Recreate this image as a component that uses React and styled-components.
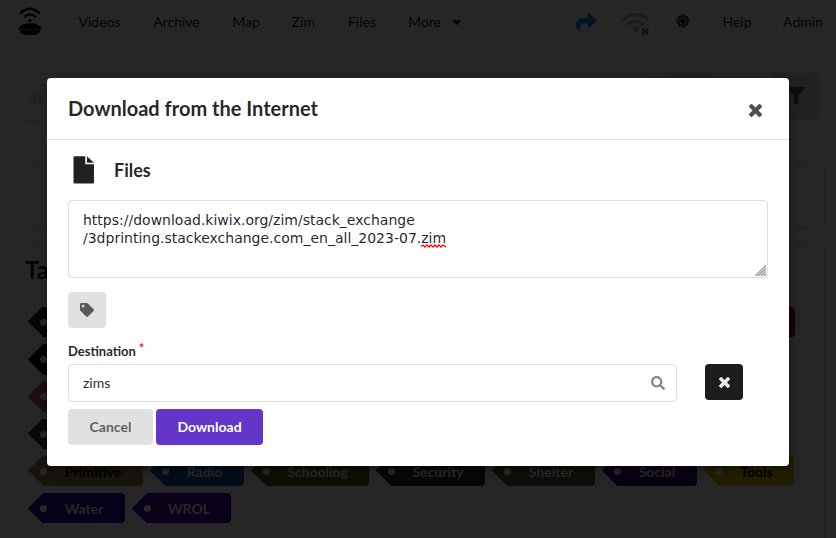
import React from "react";
import styled, { createGlobalStyle } from "styled-components";
import { FaShare, FaWifi, FaFilter, FaTag, FaSearch, FaCaretDown } from "react-icons/fa";

const GlobalStyle = createGlobalStyle`
  * { box-sizing: border-box; }
  body { margin: 0; overflow: hidden; background: #fff; color: rgba(0,0,0,.87);
    font: 14px/1.4285em Lato, "Liberation Sans", sans-serif; }
`;
const Screen = styled.div`position: relative; width: 836px; height: 538px; overflow: hidden;`;
const NavBar = styled.nav`
  display: flex; height: 45px; border-bottom: 1px solid rgba(34,36,38,.18);
`;
const NavItem = styled.a`
  width: ${p => p.$w}px; flex: none; display: flex; align-items: center; justify-content: center;
  font-size: 14px; padding: 0 ${p => p.$right || 0}px ${p => p.$bottom || 0}px ${p => p.$left || 0}px;
  border-right: ${p => (p.$plain ? 0 : 1)}px solid rgba(34,36,38,.1);
  svg { flex: none; }
`;
const Caret = styled(FaCaretDown)`margin-left: 9px; font-size: 14px;`;
const Spacer = styled.div`flex: 1;`;
const WifiGroup = styled.span`position: relative; display: flex; color: #90bde0;`;
const WifiOff = styled.span`position: absolute; right: 0; bottom: 1px; display: flex;`;
const SearchRow = styled.div`display: flex; padding: 28px 16px 0 10px;`;
const SearchBox = styled.div`
  width: 642px; height: 48px; border: 1px solid rgba(34,36,38,.15); border-radius: 4px;
  padding: 14px 18px; font-size: 16px; color: rgba(170,170,170,.6);
`;
const GreyButton = styled.div`
  width: ${p => p.$w}px; height: 46px; margin-left: ${p => p.$gap}px; border-radius: 4px;
  background: #e0e1e2; color: rgba(0,0,0,.6); display: flex; align-items: center; justify-content: center;
  font-size: 18px;
`;
const Segment = styled.section`
  margin: ${p => p.$top}px 11px 0 10px; height: ${p => p.$h}px; padding: 11px 14px 14px;
  border: 1px solid rgba(34,36,38,.15); border-radius: 4px; box-shadow: 0 1px 2px rgba(34,36,38,.15);
`;
const TagsTitle = styled.h1`margin: 0 0 22px; font-size: 24px; line-height: 30px;`;
const TagRow = styled.div`display: flex; height: 30.3px; margin: 0 0 6.95px 18px;`;
const TagLabel = styled.div`
  position: relative; width: ${p => p.$w}px; margin-right: ${p => p.$gap ?? 22}px; flex: none;
  display: flex; align-items: center; justify-content: center; padding-top: 1px;
  border-radius: 0 4px 4px 0; background: ${p => p.$bg}; color: ${p => (p.$dark ? "#000" : "#fff")};
  font-size: 14px; font-weight: 700;
  &::before { content: ""; position: absolute; width: 21.4px; height: 21.4px; left: -10.7px; top: 4.45px;
    background: inherit; transform: rotate(45deg); }
  &::after { content: ""; position: absolute; width: 7px; height: 7px; left: -3px; top: 11.8px;
    border-radius: 50%; background: #fff; }
`;
const TagText = styled.span`position: relative;`;
const Dimmer = styled.div`
  position: absolute; inset: 0; background: rgba(0,0,0,.85); padding: 78px 47px 0;
`;
const Modal = styled.div`
  width: 742px; height: 388px; background: #fff; border-radius: 4px;
  box-shadow: 1px 3px 3px rgba(0,0,0,.2), 1px 3px 15px 2px rgba(0,0,0,.2);
`;
const ModalHeader = styled.header`
  height: 62px; display: flex; align-items: flex-start; justify-content: space-between;
  padding: 17px 27px 0 21px; border-bottom: 1px solid rgba(34,36,38,.15);
`;
const ModalTitle = styled.h2`margin: 0; font-size: 20px; line-height: 26px; font-weight: 700;`;
const CloseButton = styled.span`display: flex; margin-top: 9px;`;
const ModalBody = styled.div`padding: 14px 21px;`;
const FilesHeading = styled.h3`
  display: flex; align-items: center; margin: 0; height: 32px; font-size: 18px; line-height: 24px;
`;
const FileGlyph = styled.svg`width: 22px; height: 28px; margin: 0 19px 0 5px;`;
const UrlArea = styled.div`
  display: flex; justify-content: space-between; height: 78px; margin-top: 14px; padding: 10px 1px 1px 14px;
  border: 1px solid rgba(34,36,38,.15); border-radius: 4px;
  font: 14px/18px "DejaVu Sans", sans-serif;
`;
const UrlText = styled.div`white-space: pre;`;
const Misspelled = styled.span`position: relative;`;
const Squiggle = styled.svg`position: absolute; left: 0; bottom: -2px; width: 25px; height: 4px;`;
const Grip = styled.svg`width: 11px; height: 11px; align-self: flex-end;`;
const Button = styled.button`
  width: ${p => p.$w}px; height: 36px; border: 0; border-radius: 4px; padding: 0;
  display: flex; align-items: center; justify-content: center;
  font: 700 14px/14px Lato, sans-serif;
  background: ${p => p.$bg || "#e0e1e2"}; color: ${p => p.$fg || "rgba(0,0,0,.6)"};
`;
const TagSlot = styled.div`margin-top: 14px;`;
const FieldLabel = styled.label`
  display: block; margin-top: 14px; height: 19px; font-size: 13px; line-height: 19px; font-weight: 700;
`;
const Required = styled.span`color: #db2828; margin-left: 3px; vertical-align: 3px; line-height: 0;`;
const FieldRow = styled.div`display: flex; gap: 28px; margin-top: 3px;`;
const DestinationInput = styled.div`
  width: 609px; height: 38px; border: 1px solid rgba(34,36,38,.15); border-radius: 4px;
  display: flex; align-items: center; justify-content: space-between; padding: 0 11px 0 14px;
`;
const Actions = styled.div`display: flex; gap: 3px; margin-top: 7px;`;

function PieLogo() {
  return (
    <svg width="24" height="29" viewBox="0 0 24 29">
      <g fill="none" stroke="#000" strokeLinecap="round">
        <path d="M2.8 6Q12-2.6 21.2 6" strokeWidth="2.3" />
        <path d="M6.8 9.7Q12 5 17.2 9.7" strokeWidth="2.3" />
      </g>
      <circle cx="12" cy="13.5" r="1.7" />
      <path d="M.6 21Q3 16.3 12 16.3T23.4 21Q24 22.2 22 22.6H2Q0 22.2 .6 21Z" />
      <path d="M1.5 22.5H22.5L21 26.2Q19 28 12 28T3 26.2Z" />
      <path d="M2 22.4Q12 23.8 22 22.4M8 18.4L7 19.8M12 17.8V19.2M16 18.4L17 19.8" fill="none" stroke="#888" strokeWidth=".6" />
    </svg>
  );
}
function GearSun() {
  return (
    <svg width="14" height="14" viewBox="0 0 14 14">
      <circle cx="7" cy="7" r="4.4" fill="none" stroke="#000" strokeWidth="1.5" />
      <circle cx="7" cy="7" r="5.8" fill="none" stroke="#000" strokeWidth="1.8" strokeDasharray="1.5 1.537" />
      <circle cx="7" cy="7" r="2.7" />
    </svg>
  );
}
function Cross({ size, color }) {
  return (
    <svg width={size} height={size} viewBox="302 366 1188 1188" fill={color}>
      <path d="M1490 1322q0 40-28 68l-136 136q-28 28-68 28t-68-28l-294-294-294 294q-28 28-68 28t-68-28l-136-136q-28-28-28-68t28-68l294-294-294-294q-28-28-28-68t28-68l136-136q28-28 68-28t68 28l294 294 294-294q28-28 68-28t68 28l136 136q28 28 28 68t-28 68l-294 294 294 294q28 28 28 68z" />
    </svg>
  );
}
function Tag({ children, ...rest }) {
  return <TagLabel {...rest}>{children && <TagText>{children}</TagText>}</TagLabel>;
}

export default function App() {
  return (
    <Screen>
      <GlobalStyle />
      <NavBar>
        <NavItem $w={63} $right={3} $bottom={2}><PieLogo /></NavItem>
        <NavItem $w={74}>Videos</NavItem>
        <NavItem $w={80}>Archive</NavItem>
        <NavItem $w={59}>Map</NavItem>
        <NavItem $w={56}>Zim</NavItem>
        <NavItem $w={61}>Files</NavItem>
        <NavItem $w={85} $left={2}>More<Caret /></NavItem>
        <Spacer />
        <NavItem $w={50} $plain $left={2}><FaShare size={21} color="#2185d0" /></NavItem>
        <NavItem $w={50} $plain $left={1}>
          <WifiGroup><FaWifi size={27} /><WifiOff><Cross size={7} color="#2185d0" /></WifiOff></WifiGroup>
        </NavItem>
        <NavItem $w={47} $bottom={2}><GearSun /></NavItem>
        <NavItem $w={61}>Help</NavItem>
        <NavItem $w={68} $plain $left={2}>Admin</NavItem>
      </NavBar>
      <SearchRow>
        <SearchBox>Search</SearchBox>
        <GreyButton $w={50} $gap={14} />
        <GreyButton $w={49} $gap={55}><FaFilter /></GreyButton>
      </SearchRow>
      <Segment $top={42} $h={66} />
      <Segment $top={14} $h={400}>
        <TagsTitle>Tags</TagsTitle>
        <TagRow><Tag $w={82} $bg="#333" /><Tag $w={648} $gap={0} $bg="#a0005c" /></TagRow>
        <TagRow><Tag $w={90} $bg="#000" /></TagRow>
        <TagRow><Tag $w={90} $bg="#b85a98" /></TagRow>
        <TagRow><Tag $w={90} $bg="#444" /></TagRow>
        <TagRow>
          <Tag $w={100} $gap={22} $bg="#a5854f" $dark>Primitive</Tag>
          <Tag $w={79} $gap={22} $bg="#1657ae">Radio</Tag>
          <Tag $w={103} $gap={22} $bg="#556b1c">Schooling</Tag>
          <Tag $w={94} $gap={22} $bg="#333">Security</Tag>
          <Tag $w={88} $gap={22} $bg="#655638">Shelter</Tag>
          <Tag $w={80} $gap={22} $bg="#400082">Social</Tag>
          <Tag $w={75} $gap={0} $bg="#e8ca00" $dark>Tools</Tag>
        </TagRow>
        <TagRow><Tag $w={82} $gap={22} $bg="#2600a0">Water</Tag><Tag $w={84} $bg="#480098">WROL</Tag></TagRow>
      </Segment>
      <Dimmer>
        <Modal>
          <ModalHeader>
            <ModalTitle>Download from the Internet</ModalTitle>
            <CloseButton><Cross size={13} color="#505050" /></CloseButton>
          </ModalHeader>
          <ModalBody>
            <FilesHeading>
              <FileGlyph viewBox="0 0 22 28">
                <path d="M1.2 .3H12.3V8.3H21V26.5Q21 27.5 20 27.5H1.5Q.5 27.5 .5 26.5V1Q.5 .3 1.2 .3ZM14 .3L21 6.8H14Z" fill="#212121" />
              </FileGlyph>
              Files
            </FilesHeading>
            <UrlArea>
              <UrlText>
                {"https://download.kiwix.org/zim/stack_exchange\n/3dprinting.stackexchange.com_en_all_2023-07."}
                <Misspelled>zim
                  <Squiggle viewBox="0 0 25 4"><path d="M0 2.6L2 1L4 3L6 1L8 3L10 1L12 3L14 1L16 3L18 1L20 3L22 1L25 3" fill="none" stroke="#f00" strokeWidth="1.3" /></Squiggle>
                </Misspelled>
              </UrlText>
              <Grip viewBox="0 0 11 11">
                <path d="M0 11L11 0V11Z" fill="#ddd" />
                <path d="M0 11L11 0M3 11L11 3M6 11L11 6M9 11L11 9" stroke="#999" strokeWidth="1.1" />
              </Grip>
            </UrlArea>
            <TagSlot><Button $w={38}><FaTag size={14} /></Button></TagSlot>
            <FieldLabel>Destination<Required>*</Required></FieldLabel>
            <FieldRow>
              <DestinationInput>zims<FaSearch size={14} color="#888" /></DestinationInput>
              <Button $w={38} $bg="#1b1c1d"><Cross size={11} color="#e8e8e8" /></Button>
            </FieldRow>
            <Actions>
              <Button $w={85}>Cancel</Button>
              <Button $w={107} $bg="#6435c9" $fg="#fff">Download</Button>
            </Actions>
          </ModalBody>
        </Modal>
      </Dimmer>
    </Screen>
  );
}
